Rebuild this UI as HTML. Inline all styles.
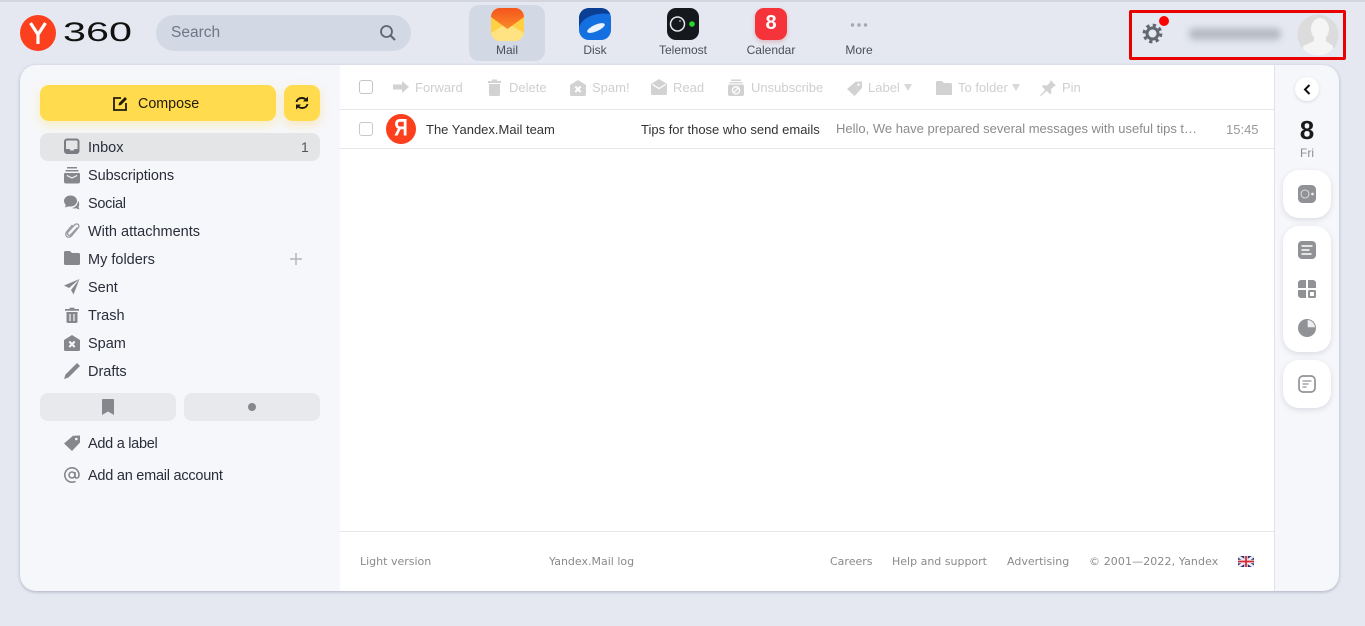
<!DOCTYPE html>
<html lang="en"><head><meta charset="utf-8"><title>Yandex Mail</title>
<style>
*{box-sizing:border-box}
html,body{margin:0;padding:0;width:1365px;height:626px;overflow:hidden;background:#e5e8f1;font-family:"Liberation Sans",sans-serif}
.a{position:absolute}
.t{position:absolute;white-space:nowrap}
svg{position:absolute;display:block}
.nav{font-size:14.5px;color:#2a2d3a;left:88px;line-height:18px}
.app{font-size:12px;color:#4a505b;top:43px;width:90px;text-align:center;line-height:15px}
.tb{font-size:13px;color:#cfcfcf;top:79px;line-height:17px}
.ft{font-family:"DejaVu Sans",sans-serif;font-size:11px;color:#8a8a8a;top:554px;line-height:15px}
.card{position:absolute;left:1283px;width:48px;background:#fff;border-radius:16px;box-shadow:0 2px 6px rgba(40,50,80,.13)}
</style></head><body>
<div class="a" style="left:0;top:0;width:1365px;height:2px;background:#d3d6de"></div>

<!-- logo -->
<svg style="left:20px;top:15px" width="36" height="36" viewBox="0 0 36 36"><circle cx="18" cy="18" r="18" fill="#fc3f1d"/><path d="M10.500 8 18 19.500V29M25.500 8 18 19.500" fill="none" stroke="#fff" stroke-width="3.200"/></svg>
<div class="t" style="left:63px;top:17px;font-size:27px;line-height:31px;color:#111;transform:scaleX(1.53);transform-origin:0 0">360</div>

<!-- search -->
<div class="a" style="left:156px;top:15px;width:255px;height:36px;border-radius:18px;background:#d3d9e4"></div>
<div class="t" style="left:171px;top:23px;font-size:15.500px;line-height:19px;color:#6f7787">Search</div>
<svg style="left:379px;top:24px" width="18" height="18" viewBox="0 0 18 18"><circle cx="7.500" cy="7.500" r="5.500" fill="none" stroke="#5f6670" stroke-width="1.800"/><path d="M11.500 11.500 16 16" stroke="#5f6670" stroke-width="2.200"/></svg>

<!-- apps -->
<div class="a" style="left:469px;top:5px;width:76px;height:56px;border-radius:10px;background:#d3d9e4"></div>
<svg style="left:491px;top:8px" width="33" height="33" viewBox="0 0 33 33"><defs><clipPath id="mc"><rect width="33" height="33" rx="9"/></clipPath><linearGradient id="mo" x1="0" y1="0" x2="0" y2="1"><stop offset="0" stop-color="#f4551c"/><stop offset="1" stop-color="#fb8a2a"/></linearGradient></defs><g clip-path="url(#mc)"><rect width="33" height="33" fill="#ffd044"/><path d="M0 33V25L16.500 15 33 25v8z" fill="#ffe382"/><path d="M0 0h33v9L16.500 21 0 9z" fill="url(#mo)"/></g></svg>
<svg style="left:579px;top:8px" width="32" height="32" viewBox="0 0 32 32"><defs><clipPath id="dc"><rect width="32" height="32" rx="10"/></clipPath></defs><g clip-path="url(#dc)"><rect width="32" height="32" fill="#1470e0"/><path d="M0 19C4 9 16 4 32 6V0H0z" fill="#0a3f94"/><ellipse cx="17" cy="20" rx="9.500" ry="3.300" transform="rotate(-24 17 20)" fill="#eaf2ff"/></g></svg>
<svg style="left:667px;top:8px" width="32" height="32" viewBox="0 0 32 32"><rect width="32" height="32" rx="9" fill="#15191e"/><circle cx="10.500" cy="16" r="7" fill="none" stroke="#e8e8e8" stroke-width="1.500"/><circle cx="13" cy="13" r="1" fill="#999"/><circle cx="25" cy="16" r="2.800" fill="#25d92c"/></svg>
<div class="a" style="left:755px;top:8px;width:32px;height:32px;border-radius:9px;background:#f5333b;box-shadow:0 2px 4px rgba(200,40,40,.25)"></div>
<div class="t" style="left:755px;top:11px;width:32px;text-align:center;color:#fff;font-size:20px;font-weight:bold;line-height:25px">8</div>
<svg style="left:850px;top:22px" width="18" height="6" viewBox="0 0 18 6"><g fill="#a4a7ae"><circle cx="2.500" cy="3" r="1.700"/><circle cx="9" cy="3" r="1.700"/><circle cx="15.500" cy="3" r="1.700"/></g></svg>
<div class="t app" style="left:462px">Mail</div>
<div class="t app" style="left:550px">Disk</div>
<div class="t app" style="left:638px">Telemost</div>
<div class="t app" style="left:726px">Calendar</div>
<div class="t app" style="left:814px">More</div>

<!-- user -->
<svg style="left:1142px;top:23px" width="21" height="21" viewBox="0 0 21 21"><g fill="none" stroke="#626872"><circle cx="10.500" cy="10.500" r="5.500" stroke-width="3"/><circle cx="10.500" cy="10.500" r="8.300" stroke-width="3.200" stroke-dasharray="3.260 3.260"/></g></svg>
<div class="a" style="left:1159px;top:16px;width:10px;height:10px;border-radius:50%;background:#f00"></div>
<div class="a" style="left:1189px;top:28px;width:92px;height:12px;border-radius:5px;background:#b6bbc3;filter:blur(3.500px)"></div>
<svg style="left:1297px;top:14px" width="42" height="42" viewBox="0 0 42 42"><defs><clipPath id="av"><circle cx="21" cy="21" r="20.500"/></clipPath></defs><circle cx="21" cy="21" r="20.500" fill="#dcdcdc"/><g clip-path="url(#av)" fill="#f5f5f5"><ellipse cx="23" cy="15" rx="9" ry="11"/><path d="M17 22h12v5l7 5v10H6v-10l11-5z"/></g></svg>
<div class="a" style="left:1129px;top:10px;width:217px;height:50px;border:3px solid #e90000;border-radius:2px"></div>

<!-- main panel -->
<div class="a" style="left:20px;top:65px;width:1319px;height:526px;border-radius:16px;background:#f6f7fa;box-shadow:0 1px 3px rgba(40,50,80,.3)"></div>
<div class="a" style="left:340px;top:65px;width:935px;height:526px;background:#fff;border-right:1px solid #e3e3e5"></div>

<!-- compose -->
<div class="a" style="left:40px;top:85px;width:236px;height:36px;border-radius:9px;background:#ffdb4d;box-shadow:0 4px 10px rgba(255,219,77,.35)"></div>
<div class="a" style="left:284px;top:85px;width:36px;height:36px;border-radius:9px;background:#ffdb4d;box-shadow:0 4px 10px rgba(255,200,77,.35)"></div>
<svg style="left:113px;top:96px" width="15" height="15" viewBox="0 0 15 15"><path d="M8 2H1v12h12V7" fill="none" stroke="#211c0a" stroke-width="1.800"/><path d="M5.500 9.500 6 7l6-6 2 2-6 6z" fill="#211c0a"/></svg>
<div class="t" style="left:138px;top:95px;font-size:14.300px;line-height:18px;color:#201b08">Compose</div>
<svg style="left:295px;top:96px" width="14" height="14" viewBox="0 0 14 14"><g fill="none" stroke="#1d1a0c" stroke-width="1.900"><path d="M1.500 6C2 3.500 4.200 2 6.800 2c2 0 3.600.8 4.700 2.200"/><path d="M12.500 8c-.5 2.500-2.700 4-5.300 4-2 0-3.600-.8-4.700-2.200"/></g><path d="M13 .5v5H8zM1 13.500v-5h5z" fill="#1d1a0c"/></svg>

<!-- nav -->
<div class="a" style="left:40px;top:133px;width:280px;height:28px;border-radius:8px;background:#e3e5e7"></div>
<svg style="left:64px;top:138px" width="16" height="17" viewBox="0 0 16 17"><rect x="1" y="1.500" width="13.500" height="13.500" rx="2" fill="none" stroke="#7b7d83" stroke-width="2"/><path d="M2 11h3.500l1 1.500h3l1-1.500H14v3H2z" fill="#7b7d83"/></svg>
<div class="t nav" style="top:139px">Inbox</div>
<div class="t" style="left:301px;top:138px;font-size:14px;line-height:18px;color:#555">1</div>
<svg style="left:64px;top:166px" width="16" height="18" viewBox="0 0 16 18"><path d="M3 1h10v1.500H3zM1.500 4h13v1.500h-13z" fill="#85878d"/><path d="M0 8a1 1 0 0 1 1-1h14a1 1 0 0 1 1 1v7.500a2 2 0 0 1-2 2H2a2 2 0 0 1-2-2z" fill="#85878d"/><path d="M3 9.500 8 12l5-2.500" stroke="#f6f7fa" fill="none" stroke-width="1.200"/></svg>
<div class="t nav" style="top:167px;letter-spacing:-.08px">Subscriptions</div>
<svg style="left:64px;top:195px" width="16" height="15" viewBox="0 0 16 15"><ellipse cx="6.500" cy="6" rx="6.500" ry="5.500" fill="#85878d"/><path d="M2 9 1 12.500 6 11z" fill="#85878d"/><path d="M14 5.500c1.500 2.500 1.500 5 .5 6.500l1 2.500-3.500-1.200c-1.500.4-3 .2-4-.3 3-.3 6-3 6-7.500z" fill="#85878d"/></svg>
<div class="t nav" style="top:195px;letter-spacing:-.3px">Social</div>
<svg style="left:65px;top:222px" width="15" height="17" viewBox="0 0 15 17"><path d="M12.500 5.500 6 12.500c-1 1-2.300 1-3 .2-.7-.8-.6-2 .3-3L9.500 3c1.200-1.300 2.800-1.400 3.700-.5 1 1 .8 2.500-.3 3.700L6.800 13.500C5 15.500 2.800 15.600 1.600 14.300.4 13 .6 11 2 9.300L7.500 3" fill="none" stroke="#9a9ca2" stroke-width="1.400"/></svg>
<div class="t nav" style="top:223px">With attachments</div>
<svg style="left:64px;top:251px" width="16" height="14" viewBox="0 0 16 14"><path d="M0 1.500A1.500 1.500 0 0 1 1.500 0h4.300L8 2h6.500A1.500 1.500 0 0 1 16 3.500v9a1.500 1.500 0 0 1-1.500 1.500h-13A1.500 1.500 0 0 1 0 12.500z" fill="#85878d"/></svg>
<div class="t nav" style="top:251px">My folders</div>
<svg style="left:290px;top:253px" width="12" height="12" viewBox="0 0 12 12"><path d="M6 0v12M0 6h12" stroke="#b4b5b9" stroke-width="1.500"/></svg>
<svg style="left:64px;top:279px" width="16" height="16" viewBox="0 0 16 16"><path d="M15.500 0 0 6.500l5 2.500L15.500 0 7 11l2.500 4.500z" fill="#85878d"/></svg>
<div class="t nav" style="top:279px">Sent</div>
<svg style="left:65px;top:307px" width="14" height="16" viewBox="0 0 14 16"><path d="M4.500 2V.8h5V2H14v1.800H0V2z" fill="#85878d"/><path d="M1.500 5h11v9.500a1.500 1.500 0 0 1-1.500 1.500H3a1.500 1.500 0 0 1-1.500-1.500z" fill="#85878d"/><path d="M5 7v7M9 7v7" stroke="#f6f7fa" stroke-width="1.200"/></svg>
<div class="t nav" style="top:307px">Trash</div>
<svg style="left:64px;top:335px" width="16" height="16" viewBox="0 0 16 16"><path d="M8 0 16 5v9.500a1.500 1.500 0 0 1-1.500 1.500h-13A1.500 1.500 0 0 1 0 14.500V5z" fill="#85878d"/><path d="M5.300 6.500 10.700 12M10.700 6.500 5.300 12" stroke="#f6f7fa" stroke-width="2"/></svg>
<div class="t nav" style="top:335px">Spam</div>
<svg style="left:64px;top:363px" width="16" height="16" viewBox="0 0 16 16"><path d="M13 0 16 3 4.500 14.500 0 16l1.500-4.500z" fill="#85878d"/></svg>
<div class="t nav" style="top:363px">Drafts</div>

<div class="a" style="left:40px;top:393px;width:136px;height:28px;border-radius:8px;background:#e8e9ec"></div>
<div class="a" style="left:184px;top:393px;width:136px;height:28px;border-radius:8px;background:#e8e9ec"></div>
<svg style="left:102px;top:399px" width="12" height="16" viewBox="0 0 12 16"><path d="M0 1a1 1 0 0 1 1-1h10a1 1 0 0 1 1 1v15L6 12.500 0 16z" fill="#85878d"/></svg>
<div class="a" style="left:248px;top:403px;width:8px;height:8px;border-radius:50%;background:#85878d"></div>

<svg style="left:64px;top:435px" width="16" height="16" viewBox="0 0 16 16"><path d="M9 .8 16 .5v7L8 16 0 8.500z" fill="#85878d"/><circle cx="12.300" cy="4" r="1.300" fill="#f6f7fa"/></svg>
<div class="t nav" style="top:435px;letter-spacing:-.28px">Add a label</div>
<svg style="left:64px;top:467px" width="16" height="16" viewBox="0 0 16 16"><g fill="none" stroke="#85878d" stroke-width="1.600"><circle cx="8" cy="8" r="3"/><path d="M11 5v4.500c0 2.500 4 2 4-1.500 0-4-3-7.200-7-7.200S.8 4 .8 8s3.200 7.200 7.200 7.200c1.500 0 2.600-.3 3.500-.8"/></g></svg>
<div class="t nav" style="top:467px;letter-spacing:-.24px">Add an email account</div>

<!-- toolbar -->
<div class="a" style="left:340px;top:109px;width:934px;height:1px;background:#e6e6e8"></div>
<div class="a" style="left:359px;top:80px;width:14px;height:14px;border:1px solid #c4c4c4;border-radius:3px;background:#fff"></div>
<svg style="left:393px;top:81px" width="16" height="12" viewBox="0 0 16 12"><path d="M0 3.500h9V0l7 6-7 6V8.500H0z" fill="#d2d2d2"/></svg>
<div class="t tb" style="left:415px">Forward</div>
<svg style="left:488px;top:79px" width="13" height="17" viewBox="0 0 13 17"><path d="M4 2V.5h5V2h4v2H0V2zM1 5h11v10.500a1.500 1.500 0 0 1-1.500 1.500h-8A1.500 1.500 0 0 1 1 15.500z" fill="#d2d2d2"/></svg>
<div class="t tb" style="left:509px">Delete</div>
<svg style="left:570px;top:80px" width="16" height="16" viewBox="0 0 16 16"><path d="M8 0 16 5v9.500a1.500 1.500 0 0 1-1.500 1.500h-13A1.500 1.500 0 0 1 0 14.500V5z" fill="#d2d2d2"/><path d="M5.300 6.500 10.700 12M10.700 6.500 5.300 12" stroke="#fff" stroke-width="2"/></svg>
<div class="t tb" style="left:592px">Spam!</div>
<svg style="left:651px;top:79px" width="16" height="16" viewBox="0 0 16 16"><path d="M8 0 16 5v9.500a1.500 1.500 0 0 1-1.500 1.500h-13A1.500 1.500 0 0 1 0 14.500V5z" fill="#d2d2d2"/><path d="M1.500 5.500 8 9.500l6.500-4" stroke="#fff" fill="none" stroke-width="1.300"/></svg>
<div class="t tb" style="left:673px">Read</div>
<svg style="left:728px;top:79px" width="16" height="17" viewBox="0 0 16 17"><path d="M3 .5h10V2H3zM1.500 3h13v1.300h-13z" fill="#d2d2d2"/><rect y="5.500" width="16" height="11.500" rx="2" fill="#d2d2d2"/><circle cx="8" cy="11.300" r="3.600" fill="none" stroke="#fff" stroke-width="1.300"/><path d="M5.500 13.800 10.500 8.800" stroke="#fff" stroke-width="1.300"/></svg>
<div class="t tb" style="left:751px">Unsubscribe</div>
<svg style="left:847px;top:81px" width="15" height="15" viewBox="0 0 16 16"><path d="M9 .8 16 .5v7L8 16 0 8.500z" fill="#d2d2d2"/><circle cx="12.300" cy="4" r="1.300" fill="#fff"/></svg>
<div class="t tb" style="left:868px">Label</div>
<svg style="left:904px;top:84px" width="8" height="7" viewBox="0 0 8 7"><path d="M0 0h8L4 7z" fill="#d8d8d8"/></svg>
<svg style="left:936px;top:81px" width="16" height="14" viewBox="0 0 16 14"><path d="M0 1.500A1.500 1.500 0 0 1 1.500 0h4.300L8 2h6.500A1.500 1.500 0 0 1 16 3.500V14H0z" fill="#d2d2d2"/></svg>
<div class="t tb" style="left:958px">To folder</div>
<svg style="left:1012px;top:84px" width="8" height="7" viewBox="0 0 8 7"><path d="M0 0h8L4 7z" fill="#d8d8d8"/></svg>
<svg style="left:1040px;top:80px" width="16" height="16" viewBox="0 0 16 16"><path d="M10.500 0 16 5.500l-2 .7-3 3 .4 4-1.400 1L6.800 10.800 1 16l-1-.500 5.200-5.800L2 6.500l1-1.400 4 .4 3-3z" fill="#d2d2d2"/></svg>
<div class="t tb" style="left:1062px">Pin</div>

<!-- message -->
<div class="a" style="left:359px;top:122px;width:14px;height:14px;border:1px solid #c8c8c8;border-radius:3px;background:#fff"></div>
<div class="a" style="left:386px;top:114px;width:30px;height:30px;border-radius:50%;background:#fc3f1d"></div>
<div class="t" style="left:386px;top:116px;width:30px;text-align:center;font-size:19px;font-weight:bold;line-height:26px;color:#fff;transform:scaleY(1.25);font-family:'Liberation Sans','Noto Sans CJK SC',sans-serif">Я</div>
<div class="t" style="left:426px;top:122px;font-size:13px;line-height:15px;color:#333">The Yandex.Mail team</div>
<div class="t" style="left:641px;top:122px;font-size:13px;line-height:15px;color:#333">Tips for those who send emails</div>
<div class="t" style="left:836px;top:121px;font-size:13px;line-height:15px;color:#8b8b8b">Hello, We have prepared several messages with useful tips t…</div>
<div class="t" style="left:1226px;top:122px;font-size:13px;line-height:15px;color:#999">15:45</div>
<div class="a" style="left:340px;top:148px;width:934px;height:1px;background:#e6e6e8"></div>

<!-- footer -->
<div class="a" style="left:340px;top:531px;width:934px;height:1px;background:#e6e6e8"></div>
<div class="t ft" style="left:360px">Light version</div>
<div class="t ft" style="left:549px">Yandex.Mail log</div>
<div class="t ft" style="left:830px">Careers</div>
<div class="t ft" style="left:892px">Help and support</div>
<div class="t ft" style="left:1007px">Advertising</div>
<div class="t ft" style="left:1089px;letter-spacing:.1px">© 2001—2022, Yandex</div>
<svg style="left:1238px;top:556px" width="16" height="11" viewBox="0 0 16 11"><rect width="16" height="11" fill="#2b2f7e"/><path d="M0 0 16 11M16 0 0 11" stroke="#eee" stroke-width="2.500"/><path d="M8 0v11M0 5.500h16" stroke="#eee" stroke-width="3.500"/><path d="M8 0v11M0 5.500h16" stroke="#d8283a" stroke-width="1.800"/></svg>

<!-- right rail -->
<div class="a" style="left:1295px;top:77px;width:24px;height:24px;border-radius:50%;background:#fff;box-shadow:0 1px 3px rgba(40,50,80,.15)"></div>
<svg style="left:1303px;top:84px" width="8" height="11" viewBox="0 0 8 11"><path d="M6.500 1 2 5.500 6.500 10" fill="none" stroke="#111" stroke-width="2"/></svg>
<div class="t" style="left:1283px;top:115px;width:48px;text-align:center;font-size:26px;font-weight:bold;line-height:30px;color:#1a1a1a">8</div>
<div class="t" style="left:1283px;top:146px;width:48px;text-align:center;font-size:12px;line-height:15px;color:#8b8d93">Fri</div>

<div class="card" style="top:170px;height:48px"></div>
<svg style="left:1298px;top:185px" width="18" height="18" viewBox="0 0 18 18"><rect width="18" height="18" rx="4.500" fill="#909296"/><circle cx="7" cy="9" r="4" fill="none" stroke="#d8d8da" stroke-width="1.100"/><circle cx="14.500" cy="9" r="1.400" fill="#e8e8ea"/></svg>

<div class="card" style="top:226px;height:126px"></div>
<svg style="left:1298px;top:241px" width="18" height="18" viewBox="0 0 18 18"><rect width="18" height="18" rx="4" fill="#909296"/><path d="M3.500 5h11M3.500 9h8M3.500 13h10" stroke="#fff" stroke-width="1.500"/></svg>
<svg style="left:1298px;top:280px" width="18" height="18" viewBox="0 0 18 18"><path d="M3 0h5v8H0V3a3 3 0 0 1 3-3zM10 0h5a3 3 0 0 1 3 3v5h-8zM0 10h8v8H3a3 3 0 0 1-3-3z" fill="#909296"/><rect x="10" y="10" width="8" height="8" rx="1.500" fill="#909296"/><rect x="12" y="12" width="4" height="4" fill="#fff"/></svg>
<svg style="left:1298px;top:319px" width="18" height="18" viewBox="0 0 18 18"><circle cx="9" cy="9" r="9" fill="#909296"/><path d="M9.700 1A8 8 0 0 1 17 8.300H9.700z" fill="#eeeef0"/></svg>

<div class="card" style="top:360px;height:48px"></div>
<svg style="left:1298px;top:375px" width="18" height="18" viewBox="0 0 18 18"><rect x="1" y="1" width="16" height="16" rx="4" fill="none" stroke="#909296" stroke-width="1.700"/><path d="M4.500 6h9M4.500 9h6M4.500 12h4" stroke="#909296" stroke-width="1.300"/></svg>
</body></html>
